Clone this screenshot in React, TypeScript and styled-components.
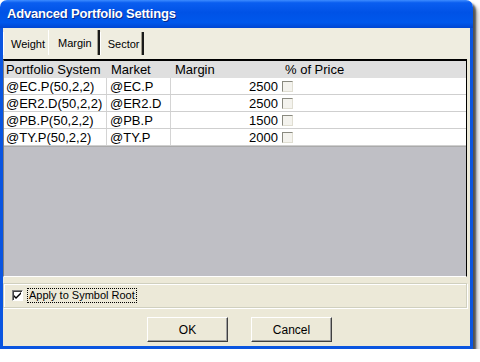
import React from "react";
import styled, { createGlobalStyle } from "styled-components";

const GlobalStyle = createGlobalStyle`
  html, body {
    margin: 0;
    padding: 0;
    background: #ffffff;
    font-family: "Liberation Sans", Arial, sans-serif;
  }
`;

type Row = { system: string; market: string; margin: number };

const rows: Row[] = [
  { system: "@EC.P(50,2,2)", market: "@EC.P", margin: 2500 },
  { system: "@ER2.D(50,2,2)", market: "@ER2.D", margin: 2500 },
  { system: "@PB.P(50,2,2)", market: "@PB.P", margin: 1500 },
  { system: "@TY.P(50,2,2)", market: "@TY.P", margin: 2000 },
];

const tabs = ["Weight", "Margin", "Sector"];

function App() {
  return (
    <>
      <GlobalStyle />
      <Window>
        <TitleBar>Advanced Portfolio Settings</TitleBar>
        <Body>
          <TabStrip>
            {tabs.map((t) => (
              <Tab key={t} $active={t === "Margin"} $edge={t !== "Weight"}>
                {t}
              </Tab>
            ))}
          </TabStrip>
          <Grid>
            <HeaderRow>
              <HeadCell>Portfolio System</HeadCell>
              <HeadCell>Market</HeadCell>
              <HeadCell>Margin</HeadCell>
              <HeadCell $pct>% of Price</HeadCell>
            </HeaderRow>
            {rows.map((r) => (
              <DataRow key={r.system}>
                <Cell>{r.system}</Cell>
                <Cell $line>{r.market}</Cell>
                <Cell $line $num>{r.margin}</Cell>
                <Cell>
                  <SmallBox />
                </Cell>
              </DataRow>
            ))}
            <Empty />
          </Grid>
          <Group>
            <CheckLabel>
              <CheckBox>
                <svg width="9" height="9" viewBox="0 0 9 9">
                  <path d="M1 4 L3 6 L8 1 L8 3 L3 8 L1 6 Z" fill="#000" />
                </svg>
              </CheckBox>
              <Focus>Apply to Symbol Root</Focus>
            </CheckLabel>
          </Group>
          <Buttons>
            <Button>OK</Button>
            <Button>Cancel</Button>
          </Buttons>
        </Body>
      </Window>
    </>
  );
}

export default App;

const Window = styled.div`
  width: 473px;
  height: 349px;
  display: flex;
  flex-direction: column;
  border-radius: 7px 7px 0 0;
  box-shadow: 3px 3px 2px rgba(0, 0, 0, 0.55), 5px 6px 5px rgba(0, 0, 0, 0.3);
`;

const TitleBar = styled.div`
  height: 28px;
  flex-shrink: 0;
  display: flex;
  align-items: center;
  padding: 0 0 1px 7px;
  box-sizing: border-box;
  border-radius: 7px 7px 0 0;
  background: linear-gradient(
    180deg,
    #3d8cff 0%,
    #0a5ef0 10%,
    #0052e6 45%,
    #0058ec 80%,
    #0046d2 100%
  );
  color: #ffffff;
  font-weight: bold;
  font-size: 13px;
  letter-spacing: -0.2px;
  text-shadow: 1px 1px 0 #0a2a8a;
`;

const Body = styled.div`
  flex: 1;
  display: flex;
  flex-direction: column;
  background: #ece9d8;
  border: 3px solid #0a55e0;
  border-top: 0;
`;

const TabStrip = styled.div`
  height: 31px;
  flex-shrink: 0;
  display: flex;
  align-items: flex-end;
  padding-bottom: 4px;
  box-sizing: border-box;
  background: #efede0;
`;

const Tab = styled.div<{ $active?: boolean; $edge?: boolean }>`
  height: ${(p) => (p.$active ? 25 : 23)}px;
  display: flex;
  align-items: center;
  padding: 0 ${(p) => (p.$active ? 6 : 3)}px 0 ${(p) => (p.$active ? 9 : 7)}px;
  font-size: 11px;
  color: #000;
  border-left: 1px solid #ffffff;
  border-right: ${(p) => (p.$edge ? "2px solid #1a1a1a" : "0")};
  box-shadow: ${(p) => (p.$edge ? "inset -1px 0 0 #a09c8c" : "none")};
`;

const Grid = styled.div`
  height: 218px;
  flex-shrink: 0;
  box-sizing: border-box;
  display: flex;
  flex-direction: column;
  margin-right: 3px;
  border-top: 2px solid #000;
  border-left: 1px solid #808080;
  border-right: 1px solid #000;
  border-bottom: 1px solid #ffffff;
  background: #bfbfc5;
  font-size: 13px;
  color: #000;
`;

const HeaderRow = styled.div`
  height: 17px;
  display: grid;
  grid-template-columns: 102px 64px 110px 1fr;
  background: #dfdfdf;
`;

const HeadCell = styled.div<{ $pct?: boolean }>`
  padding-left: ${(p) => (p.$pct ? 5 : 2)}px;
  line-height: 17px;
  white-space: nowrap;
  &:nth-child(2) {
    padding-left: 5px;
  }
  &:nth-child(3) {
    padding-left: 5px;
  }
`;

const DataRow = styled.div`
  height: 17px;
  display: grid;
  grid-template-columns: 102px 64px 110px 1fr;
  background: #ffffff;
  border-bottom: 1px solid #cfcfcf;
  box-sizing: border-box;
  &:last-of-type {
    border-bottom: 0;
  }
`;

const Cell = styled.div<{ $line?: boolean; $num?: boolean }>`
  line-height: 17px;
  white-space: nowrap;
  overflow: hidden;
  padding: 0 2px 0 ${(p) => (p.$line ? 3 : 2)}px;
  border-left: ${(p) => (p.$line ? "1px solid #d4d4d4" : "0")};
  display: flex;
  align-items: center;
  justify-content: ${(p) => (p.$num ? "flex-end" : "flex-start")};
`;

const SmallBox = styled.span`
  width: 11px;
  height: 11px;
  box-sizing: border-box;
  background: #f4f3ee;
  border-top: 1px solid #8a8a80;
  border-left: 1px solid #8a8a80;
  border-right: 1px solid #e0ded2;
  border-bottom: 1px solid #e0ded2;
`;

const Empty = styled.div`
  flex: 1;
  border-top: 1px solid #aaaaaa;
`;

const Group = styled.div`
  height: 25px;
  flex-shrink: 0;
  box-sizing: border-box;
  margin: 6px 3px 0 0;
  display: flex;
  align-items: center;
  padding-left: 8px;
  border: 1px solid #d0d0bf;
  box-shadow: inset 1px 1px 0 #ffffff, 1px 1px 0 #ffffff;
`;

const CheckLabel = styled.label`
  display: flex;
  align-items: center;
  gap: 5px;
  font-size: 11px;
  color: #000;
`;

const CheckBox = styled.span`
  width: 11px;
  height: 11px;
  box-sizing: border-box;
  display: flex;
  align-items: center;
  justify-content: center;
  background: #ffffff;
  border-top: 1px solid #808080;
  border-left: 1px solid #808080;
  border-right: 1px solid #ffffff;
  border-bottom: 1px solid #ffffff;
  box-shadow: inset 1px 1px 0 #404040;
`;

const Focus = styled.span`
  outline: 1px dotted #000;
  padding: 0 1px;
  line-height: 13px;
`;

const Buttons = styled.div`
  display: flex;
  justify-content: center;
  gap: 23px;
  padding: 9px 0 0 6px;
`;

const Button = styled.button`
  width: 81px;
  height: 25px;
  background: #ece9d8;
  font-family: "Liberation Sans", Arial, sans-serif;
  font-size: 12px;
  color: #000;
  border: 0;
  border-top: 1px solid #ffffff;
  border-left: 1px solid #ffffff;
  border-right: 1px solid #404040;
  border-bottom: 1px solid #404040;
  box-shadow: inset -1px -1px 0 #a0a0a0;
  padding: 0;
`;
